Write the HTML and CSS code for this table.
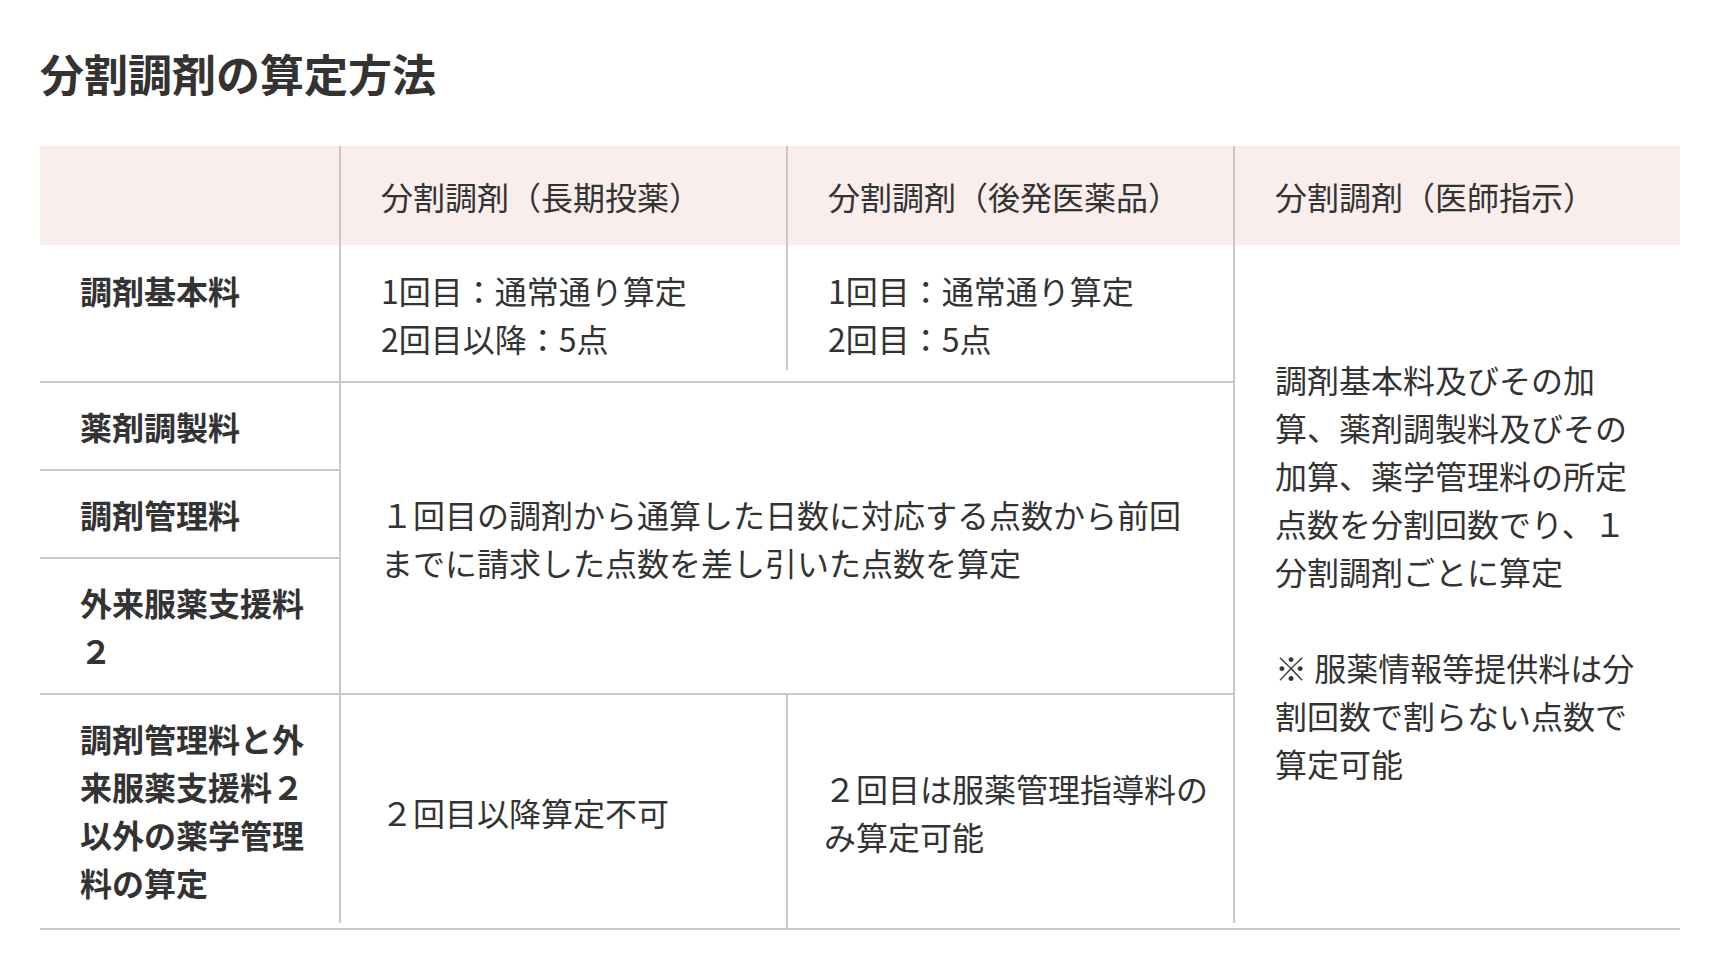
FILE: index.html
```html
<!DOCTYPE html>
<html lang="ja">
<head>
<meta charset="utf-8">
<title>分割調剤の算定方法</title>
<link rel="stylesheet" href="styles.css">
</head>
<body>
<main class="page">
  <h2 class="title">分割調剤の算定方法</h2>
  <div class="table">
    <div class="cell head c1 r1"></div>
    <div class="cell head vline c2 r1">分割調剤（長期投薬）</div>
    <div class="cell head vline c3 r1">分割調剤（後発医薬品）</div>
    <div class="cell head vline c4 r1">分割調剤（医師指示）</div>

    <div class="cell label c1 r2">調剤基本料</div>
    <div class="cell body vline c2 r2">1回目：通常通り算定<br>2回目以降：5点</div>
    <div class="cell body vline-short c3 r2">1回目：通常通り算定<br>2回目：5点</div>
    <div class="cell body note vline-end c4 r2-6">調剤基本料及びその加算、薬剤調製料及びその加算、薬学管理料の所定点数を分割回数でり、１分割調剤ごとに算定<br><br>※ 服薬情報等提供料は分割回数で割らない点数で算定可能</div>

    <div class="cell label c1 r3">薬剤調製料</div>
    <div class="cell body merged vline center c2-3 r3-5">１回目の調剤から通算した日数に対応する点数から前回までに請求した点数を差し引いた点数を算定</div>
    <div class="cell label c1 r4">調剤管理料</div>
    <div class="cell label c1 r5">外来服薬支援料２</div>

    <div class="cell label last c1 r6">調剤管理料と外来服薬支援料２以外の薬学管理料の算定</div>
    <div class="cell body vline-end center c2 r6">２回目以降算定不可</div>
    <div class="cell body vline center narrow c3 r6">２回目は服薬管理指導料のみ算定可能</div>
  </div>
</main>
</body>
</html>
```
FILE: styles.css
```css
* { box-sizing: border-box; }

html, body {
  margin: 0;
  padding: 0;
  background: #ffffff;
}

body {
  font-family: "Noto Sans CJK JP", "Noto Sans", sans-serif;
  color: #333333;
}

.page {
  padding: 40px 40px 0 40px;
  width: 1720px;
}

.title {
  margin: 0;
  font-size: 44px;
  line-height: 66px;
  font-weight: 700;
  color: #333333;
}

.table {
  margin-top: 40px;
  width: 1640px;
  display: grid;
  grid-template-columns: 299px repeat(3, 447px);
  font-size: 32px;
  line-height: 48px;
}

.cell {
  padding: 19px 20px 19px 42px;
  border-bottom: 2px solid #c8c8c8;
}

.head {
  background-color: #f9eeec;
  border-bottom: none;
  padding-top: 26px;
  padding-bottom: 25px;
}

.r2 {
  padding-top: 21px;
}

.label {
  font-weight: 700;
  padding-left: 40px;
}

.last {
  padding-bottom: 22px;
}

.vline {
  background-image: linear-gradient(#c8c8c8, #c8c8c8);
  background-repeat: no-repeat;
  background-position: 0 0;
  background-size: 2px 100%;
}

.vline-short {
  background-image: linear-gradient(#c8c8c8, #c8c8c8);
  background-repeat: no-repeat;
  background-position: 0 0;
  background-size: 2px calc(100% - 11px);
}

.vline-end {
  background-image: linear-gradient(#c8c8c8, #c8c8c8);
  background-repeat: no-repeat;
  background-position: 0 0;
  background-size: 2px calc(100% - 5px);
}

.center {
  display: flex;
  flex-direction: column;
  justify-content: center;
}

.note {
  display: flex;
  flex-direction: column;
  justify-content: center;
  padding-top: 19px;
  padding-right: 40px;
  padding-bottom: 50px;
}

.merged {
  padding-right: 40px;
}

.narrow {
  padding-left: 38px;
  padding-right: 16px;
}

.c1 { grid-column: 1; }
.c2 { grid-column: 2; }
.c3 { grid-column: 3; }
.c4 { grid-column: 4; }
.c2-3 { grid-column: 2 / span 2; }

.r1 { grid-row: 1; }
.r2 { grid-row: 2; }
.r3 { grid-row: 3; }
.r4 { grid-row: 4; }
.r5 { grid-row: 5; }
.r6 { grid-row: 6; }
.r3-5 { grid-row: 3 / span 3; }
.r2-6 { grid-row: 2 / span 5; }
```
